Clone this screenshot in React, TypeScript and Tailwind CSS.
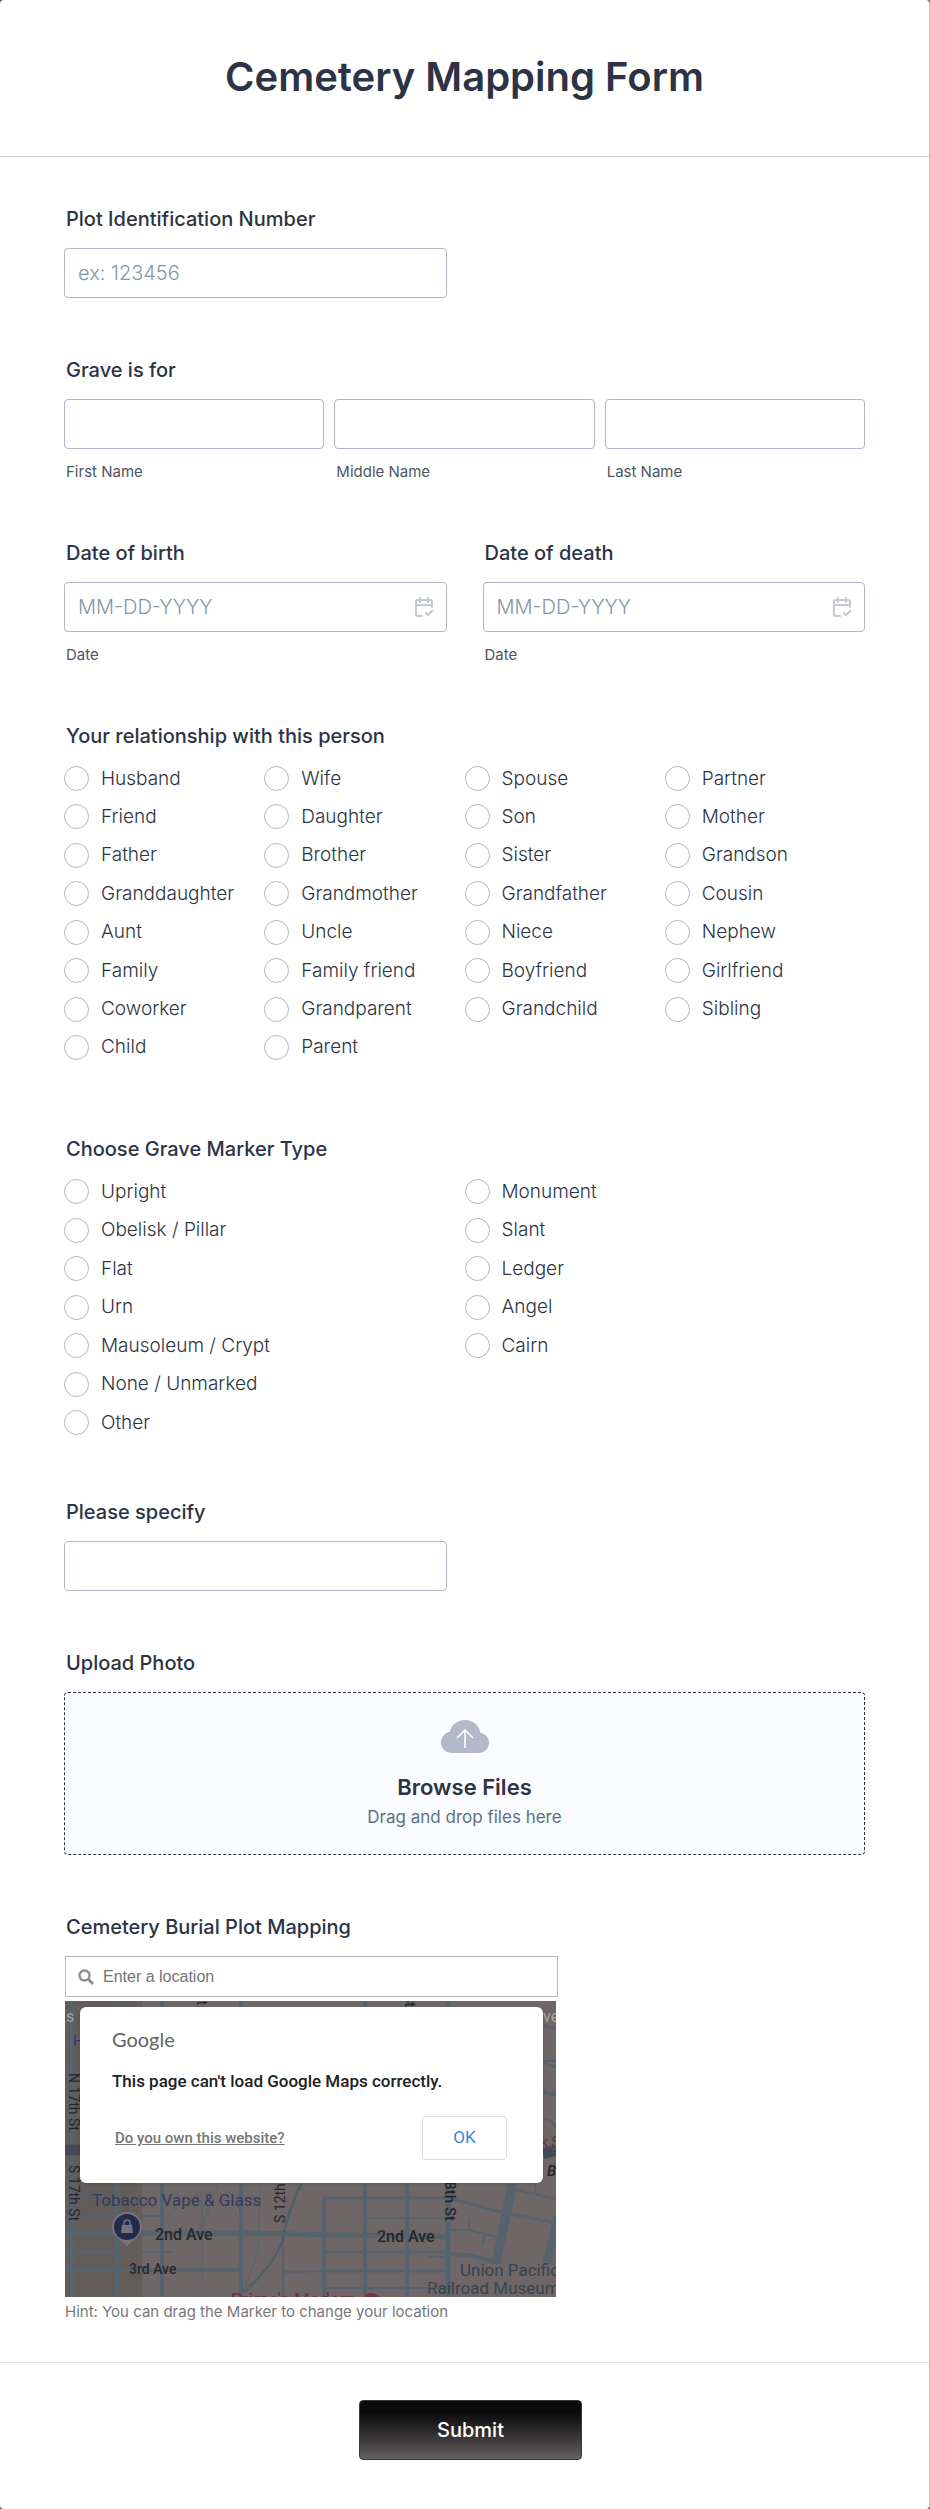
import type { ReactNode } from 'react'
import { clsx } from 'clsx'

const relationships = [
  'Husband', 'Wife', 'Spouse', 'Partner',
  'Friend', 'Daughter', 'Son', 'Mother',
  'Father', 'Brother', 'Sister', 'Grandson',
  'Granddaughter', 'Grandmother', 'Grandfather', 'Cousin',
  'Aunt', 'Uncle', 'Niece', 'Nephew',
  'Family', 'Family friend', 'Boyfriend', 'Girlfriend',
  'Coworker', 'Grandparent', 'Grandchild', 'Sibling',
  'Child', 'Parent',
]

const markerTypes = [
  'Upright', 'Monument',
  'Obelisk / Pillar', 'Slant',
  'Flat', 'Ledger',
  'Urn', 'Angel',
  'Mausoleum / Crypt', 'Cairn',
  'None / Unmarked',
  'Other',
]

const labelClass = 'block pl-[2px] text-[20px] leading-6 font-medium'
const subLabelClass = 'mt-[14px] block pl-[2px] text-[15px] leading-[18px] text-[#4f5560]'
const inputClass =
  'block h-[50px] w-full rounded border border-[#b0b6c6] bg-white px-[13px] text-[20px] font-light outline-none placeholder:text-[#8197a6] focus:border-[#2c3345]'

interface FieldProps {
  id: string
  label: string
  children: ReactNode
}

function Field({ id, label, children }: FieldProps) {
  return (
    <div>
      <label htmlFor={id} className={clsx(labelClass, 'mb-[17px]')}>{label}</label>
      {children}
    </div>
  )
}

function NameInput({ id, label }: { id: string; label: string }) {
  return (
    <div className="min-w-0 flex-1">
      <input id={id} type="text" className={inputClass} />
      <label htmlFor={id} className={subLabelClass}>{label}</label>
    </div>
  )
}

function CalendarIcon() {
  return (
    <svg viewBox="0 0 18 20" className="h-5 w-[18px]" fill="none" stroke="#c3c7d6" strokeWidth="2" strokeLinecap="round" strokeLinejoin="round">
      <path d="M17 10V5a2 2 0 0 0-2-2H3a2 2 0 0 0-2 2v12a2 2 0 0 0 2 2h4" />
      <path d="M1 8h16M5 1v4M13 1v4" />
      <path d="m11 16 2 2 4-4" />
    </svg>
  )
}

function DateField({ id, label }: { id: string; label: string }) {
  return (
    <div className="min-w-0 flex-1">
      <Field id={id} label={label}>
        <div className="relative">
          <input id={id} type="text" placeholder="MM-DD-YYYY" className={inputClass} />
          <button type="button" aria-label="Open calendar" className="absolute inset-y-0 right-[14px] flex items-center">
            <CalendarIcon />
          </button>
        </div>
        <label htmlFor={id} className={subLabelClass}>Date</label>
      </Field>
    </div>
  )
}

interface RadioGroupProps {
  name: string
  label: string
  options: string[]
  className: string
}

function RadioGroup({ name, label, options, className }: RadioGroupProps) {
  return (
    <fieldset>
      <legend className={clsx(labelClass, 'mb-[18px]')}>{label}</legend>
      <div className={clsx('grid content-between gap-y-3', className)}>
        {options.map((option, i) => (
          <label
            key={option}
            className={clsx('flex h-[25px] items-center gap-3 text-[19px] leading-6 font-light whitespace-nowrap', option === 'Other' && 'col-start-1')}
          >
            <input
              type="radio"
              name={name}
              value={option}
              id={`${name}-${i}`}
              className="size-[25px] shrink-0 appearance-none rounded-full border border-[#b0b6c6] bg-white checked:border-8 checked:border-[#2c3345]"
            />
            {option}
          </label>
        ))}
      </div>
    </fieldset>
  )
}

function MapDrawing() {
  return (
    <svg viewBox="0 0 491 296" preserveAspectRatio="xMidYMid slice" className="absolute inset-0 h-full w-full" fontFamily="Roboto, sans-serif">
      <rect width="491" height="296" fill="#6f6767" />
      <rect width="77" height="296" fill="#625d5b" />
      <g stroke="#57636c" fill="none">
        {/* streets */}
        <path strokeWidth="4" d="M7 0V296M97 0V296M176 0V296M259 197V296M300 0V296M342 0V296M0 269H176" />
        <path strokeWidth="5" d="M0 232H176L381 236M52 0V296M383 0V296" />
        <path strokeWidth="3" d="M259 197H383L436 211L491 222M259 251H383M259 270H383M0 251H50" />
        <path strokeWidth="2" d="M300 217H383M259 287H383M218 232V296M218 271L259 270M15 196H40M0 215H95M77 251H107" />
        <path strokeWidth="9" d="M449 176L431 262M493 215L482 262" />
        <path strokeWidth="4" d="M383 253L405 254L433 262" />
        <path strokeWidth="2" d="M385 229H404L433 236M404 230V217M420 234L417 244M383 256H362M447 188L491 198M470 182V194" />
        <path strokeWidth="1" d="M137 190V279M195 182L193 252L178 291M154 182L137 226M112 190C118 205 100 217 102 215M130 190L145 215M165 205Q176 218 176 230" />
        <path strokeWidth="3" d="M237 182Q222 210 218 239Q208 265 178 292" />
      </g>
      <path d="M237 182Q222 210 218 239Q208 265 178 292" stroke="#4c5258" strokeDasharray="3 2" fill="none" />
      {/* strips beside the dialog */}
      <path d="M0 0H15M0 25H15M0 44H15M0 66H15M470 60H491M470 92H491" stroke="#57636c" strokeWidth="2" />
      <path d="M478 23Q484 28 491 28M478 60Q484 65 491 66M478 88Q484 95 491 94M478 118Q488 118 491 128" stroke="#57636c" strokeWidth="2" fill="none" />
      <path d="M0 149H15M478 153L491 149" stroke="#454b54" strokeWidth="11" />
      <g fontSize="16" fill="#a7a3a3">
        <text x="1" y="21">s</text>
        <text x="478" y="21">ve</text>
      </g>
      <text x="8" y="45" fontSize="15" fill="#2f3a5e">H</text>
      <text x="476" y="146" fontSize="14" fill="#6e2c3c">k S</text>
      <text x="482" y="175" fontSize="15" fontStyle="italic" fontWeight="500" fill="#24262b">B</text>
      <g fontSize="14" fill="#24262b">
        <text transform="translate(4 72) rotate(90)">N 17th St</text>
        <text transform="translate(4 164) rotate(90)">S 17th St</text>
        <text transform="translate(220 222) rotate(-90)">S 12th St</text>
        <text transform="translate(380 220) rotate(90)" textAnchor="end" fontSize="15" fontWeight="500">S 8th St</text>
        <text transform="translate(132 4) rotate(90)" textAnchor="end">St</text>
        <text transform="translate(340 6) rotate(90)" textAnchor="end" fontWeight="500">St</text>
      </g>
      <text x="27" y="205" fontSize="17" fill="#2f3a5e">Tobacco Vape &amp; Glass</text>
      <g fill="#24262b" fontWeight="500" fontSize="16">
        <text x="90" y="239">2nd Ave</text>
        <text x="312" y="241">2nd Ave</text>
        <text x="64" y="273" fontSize="14">3rd Ave</text>
      </g>
      <g fontSize="17" fill="#37434f">
        <text x="395" y="275">Union Pacific</text>
        <text x="362" y="293">Railroad Museum</text>
      </g>
      <text x="166" y="305" fontSize="18" fill="#6e2c3c">Primo's Modern</text>
      <circle cx="306" cy="303" r="11" fill="#7d3340" />
      {/* shop pin */}
      <path d="M62 246C59 240 47 236 47 226A15 15 0 0 1 77 226C77 236 65 240 62 246Z" fill="#77757b" />
      <circle cx="62" cy="226" r="13" fill="#222b4d" />
      <path d="M57 224H67L68 232H56Z" fill="#74747f" />
      <path d="M59 224V222A3 3 0 0 1 65 222V224" fill="none" stroke="#74747f" strokeWidth="1.5" />
    </svg>
  )
}

function BurialMap() {
  return (
    <div className="relative mt-1 ml-px h-[296px] max-w-[491px] overflow-hidden">
      <MapDrawing />
      <div className="absolute top-[6px] right-[13px] left-[15px] rounded-md bg-white px-8 pt-5 pb-[23px] font-[Roboto,sans-serif] shadow">
        <div className="font-[Lato,sans-serif] text-[20px] leading-6 text-[#5f6368]">Google</div>
        <p className="mt-[18px] text-[17px] leading-6 font-medium whitespace-nowrap text-[#202124]">This page can't load Google Maps correctly.</p>
        <div className="mt-[23px] flex items-center justify-between pr-1 pl-[3px]">
          <a href="#" className="text-[15px] leading-5 font-medium text-[#757575] underline">Do you own this website?</a>
          <button type="button" className="h-11 w-[85px] rounded border border-[#dadce0] text-[17px] text-[#3a84df]">OK</button>
        </div>
      </div>
    </div>
  )
}

export default function App() {
  return (
    <div className="bg-[#55565a]">
      <form
        className="rounded border-r border-[#bfbfbf] bg-white font-[Inter,sans-serif] text-[#2c3345]"
        onSubmit={(e) => e.preventDefault()}
      >
        <header className="border-b border-[#cdd1dc] px-8 pt-[53px] pb-[55px]">
          <h1 className="text-center text-[40px] leading-12 font-semibold">Cemetery Mapping Form</h1>
        </header>

        <main className="flex flex-col gap-15 px-16 pt-[50px] pb-10">
          <Field id="plot" label="Plot Identification Number">
            <div className="w-1/2 pr-[18px]">
              <input id="plot" type="text" placeholder="ex: 123456" className={inputClass} />
            </div>
          </Field>

          <fieldset>
            <legend className={clsx(labelClass, 'mb-[17px]')}>Grave is for</legend>
            <div className="flex gap-[10px]">
              <NameInput id="first" label="First Name" />
              <NameInput id="middle" label="Middle Name" />
              <NameInput id="last" label="Last Name" />
            </div>
          </fieldset>

          <div className="flex gap-9">
            <DateField id="birth" label="Date of birth" />
            <DateField id="death" label="Date of death" />
          </div>

          <div className="pb-[17px]">
            <RadioGroup name="relationship" label="Your relationship with this person" options={relationships} className="min-h-[294px] grid-cols-4" />
          </div>

          <div className="pb-[5px]">
            <RadioGroup name="marker" label="Choose Grave Marker Type" options={markerTypes} className="min-h-[256px] grid-cols-2" />
          </div>

          <Field id="specify" label="Please specify">
            <div className="w-1/2 pr-[18px]">
              <input id="specify" type="text" className={inputClass} />
            </div>
          </Field>

          <Field id="photo" label="Upload Photo">
            <label htmlFor="photo" className="flex flex-col items-center rounded border border-dashed border-[#2c3345] bg-[#fbfcff] pt-[27px] pb-[25px]">
              <svg viewBox="0 0 48 33" className="h-[33px] w-12">
                <path d="M11 33C5 33 0 28.500 0 22.500C0 17 4 12.500 9 11.700C10 5 16.500 0 24 0C32 0 38.500 5.500 39.300 13C44 13.500 48 17.500 48 22.800C48 28.500 43.500 33 38 33Z" fill="#b3b9ca" />
                <path d="M24 28V10M16 18l8-8 8 8" fill="none" stroke="#fff" strokeWidth="1.600" />
              </svg>
              <span className="mt-5 text-[22px] leading-7 font-semibold">Browse Files</span>
              <span className="mt-1 text-[17px] leading-6 text-[#5c7080]">Drag and drop files here</span>
              <input id="photo" type="file" className="sr-only" />
            </label>
          </Field>

          <Field id="location" label="Cemetery Burial Plot Mapping">
            <div className="relative ml-px max-w-[493px]">
              <svg viewBox="0 0 16 16" className="pointer-events-none absolute top-[13px] left-[13px] size-4" fill="none" stroke="#8e8e93">
                <circle cx="6.500" cy="6.500" r="5" strokeWidth="2.400" />
                <path d="m10.500 10.500 4.500 4.500" strokeWidth="3" />
              </svg>
              <input
                id="location"
                type="text"
                placeholder="Enter a location"
                className="block h-[41px] w-full border border-[#b5b9c2] pr-3 pl-[37px] font-['Liberation_Sans',sans-serif] text-[16px] outline-none placeholder:text-[#757575]"
              />
            </div>
            <BurialMap />
            <p className="mt-[5px] ml-px text-[15px] leading-5 text-[#77777c]">Hint: You can drag the Marker to change your location</p>
          </Field>
        </main>

        <footer className="flex justify-center border-t border-[#e0e2ec] pt-[37px] pb-[49px] pl-3">
          <button
            type="submit"
            className="h-[60px] w-[223px] rounded border border-[#3a3a3e] bg-linear-to-b from-[#0c0c0c] from-20% to-[#666062] text-[20px] font-medium text-white"
          >
            Submit
          </button>
        </footer>
      </form>
    </div>
  )
}
